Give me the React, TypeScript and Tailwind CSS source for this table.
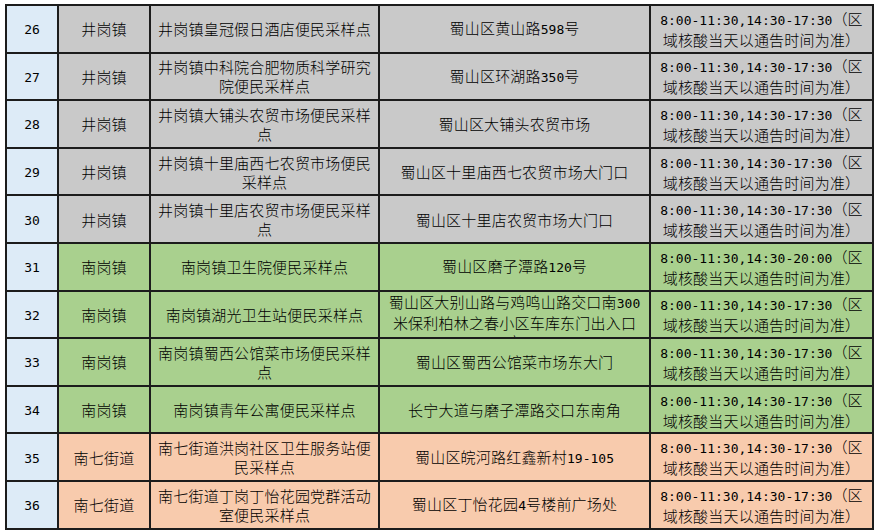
import React from 'react';

type Row = {
  no: number;
  town: string;
  site: string[];
  addr: string[];
  time: string;
  tone: 'gray' | 'green' | 'orange';
};

const rows: Row[] = [
  { no: 26, town: '井岗镇', site: ['井岗镇皇冠假日酒店便民采样点'], addr: ['蜀山区黄山路598号'], time: '17:30', tone: 'gray' },
  { no: 27, town: '井岗镇', site: ['井岗镇中科院合肥物质科学研究', '院便民采样点'], addr: ['蜀山区环湖路350号'], time: '17:30', tone: 'gray' },
  { no: 28, town: '井岗镇', site: ['井岗镇大铺头农贸市场便民采样', '点'], addr: ['蜀山区大铺头农贸市场'], time: '17:30', tone: 'gray' },
  { no: 29, town: '井岗镇', site: ['井岗镇十里庙西七农贸市场便民', '采样点'], addr: ['蜀山区十里庙西七农贸市场大门口'], time: '17:30', tone: 'gray' },
  { no: 30, town: '井岗镇', site: ['井岗镇十里店农贸市场便民采样', '点'], addr: ['蜀山区十里店农贸市场大门口'], time: '17:30', tone: 'gray' },
  { no: 31, town: '南岗镇', site: ['南岗镇卫生院便民采样点'], addr: ['蜀山区磨子潭路120号'], time: '20:00', tone: 'green' },
  { no: 32, town: '南岗镇', site: ['南岗镇湖光卫生站便民采样点'], addr: ['蜀山区大别山路与鸡鸣山路交口南300', '米保利柏林之春小区车库东门出入口', '旁'], time: '17:30', tone: 'green' },
  { no: 33, town: '南岗镇', site: ['南岗镇蜀西公馆菜市场便民采样', '点'], addr: ['蜀山区蜀西公馆菜市场东大门'], time: '17:30', tone: 'green' },
  { no: 34, town: '南岗镇', site: ['南岗镇青年公寓便民采样点'], addr: ['长宁大道与磨子潭路交口东南角'], time: '17:30', tone: 'green' },
  { no: 35, town: '南七街道', site: ['南七街道洪岗社区卫生服务站便', '民采样点'], addr: ['蜀山区皖河路红鑫新村19-105'], time: '17:30', tone: 'orange' },
  { no: 36, town: '南七街道', site: ['南七街道丁岗丁怡花园党群活动', '室便民采样点'], addr: ['蜀山区丁怡花园4号楼前广场处'], time: '17:30', tone: 'orange' },
];

const toneBg = {
  gray: 'bg-[#c9c9c9]',
  green: 'bg-[#a9d08e]',
  orange: 'bg-[#f8cbad]',
};

// ascii runs get the narrow half-width font, like the sheet's SimSun
function Txt({ s }: { s: string }) {
  const parts = s.split(/([\x20-\x7e]+)/);
  return (
    <>
      {parts.map((p, i) =>
        /^[\x20-\x7e]+$/.test(p) ? (
          <span key={i} className="font-['DejaVu_Sans_Mono'] text-[13px] tracking-normal">
            {p}
          </span>
        ) : (
          <React.Fragment key={i}>{p}</React.Fragment>
        )
      )}
    </>
  );
}

function Lines({ lines }: { lines: string[] }) {
  return (
    <>
      {lines.map((l, i) => (
        <div key={i} className="whitespace-nowrap">
          <Txt s={l} />
        </div>
      ))}
    </>
  );
}

export default function App() {
  return (
    <div className="w-[877px] h-[532px] bg-white pt-[4px] pl-[5px] font-['Noto_Sans_CJK_SC',sans-serif] font-light text-[15px] leading-[19px] tracking-[0.2px] text-black">
      <table className="table-fixed border-collapse w-[867px] h-[524px]">
        <colgroup>
          <col className="w-[52px]" />
          <col className="w-[92px]" />
          <col className="w-[229px]" />
          <col className="w-[271px]" />
          <col className="w-[223px]" />
        </colgroup>
        <tbody>
          {rows.map((r) => {
            const bg = toneBg[r.tone];
            const tall = r.addr.length > 2;
            return (
              <tr key={r.no} className="h-[47.6px]">
                <td className="border-2 border-[#1c1c1c] bg-[#ddebf7] text-center align-middle p-0">
                  <Txt s={String(r.no)} />
                </td>
                <td className={`border-2 border-[#1c1c1c] ${bg} text-center align-middle p-0`}>{r.town}</td>
                <td className={`border-2 border-[#1c1c1c] ${bg} text-center align-middle p-0`}>
                  <Lines lines={r.site} />
                </td>
                <td className={`border-2 border-[#1c1c1c] ${bg} text-center p-0 ${tall ? 'align-top' : 'align-middle'}`}>
                  {tall ? (
                    <div className="h-[45px] overflow-hidden">
                      <Lines lines={r.addr} />
                    </div>
                  ) : (
                    <Lines lines={r.addr} />
                  )}
                </td>
                <td className={`border-2 border-[#1c1c1c] ${bg} text-center align-middle p-0`}>
                  <Lines lines={[`8:00-11:30,14:30-${r.time}（区`, '域核酸当天以通告时间为准）']} />
                </td>
              </tr>
            );
          })}
        </tbody>
      </table>
    </div>
  );
}
